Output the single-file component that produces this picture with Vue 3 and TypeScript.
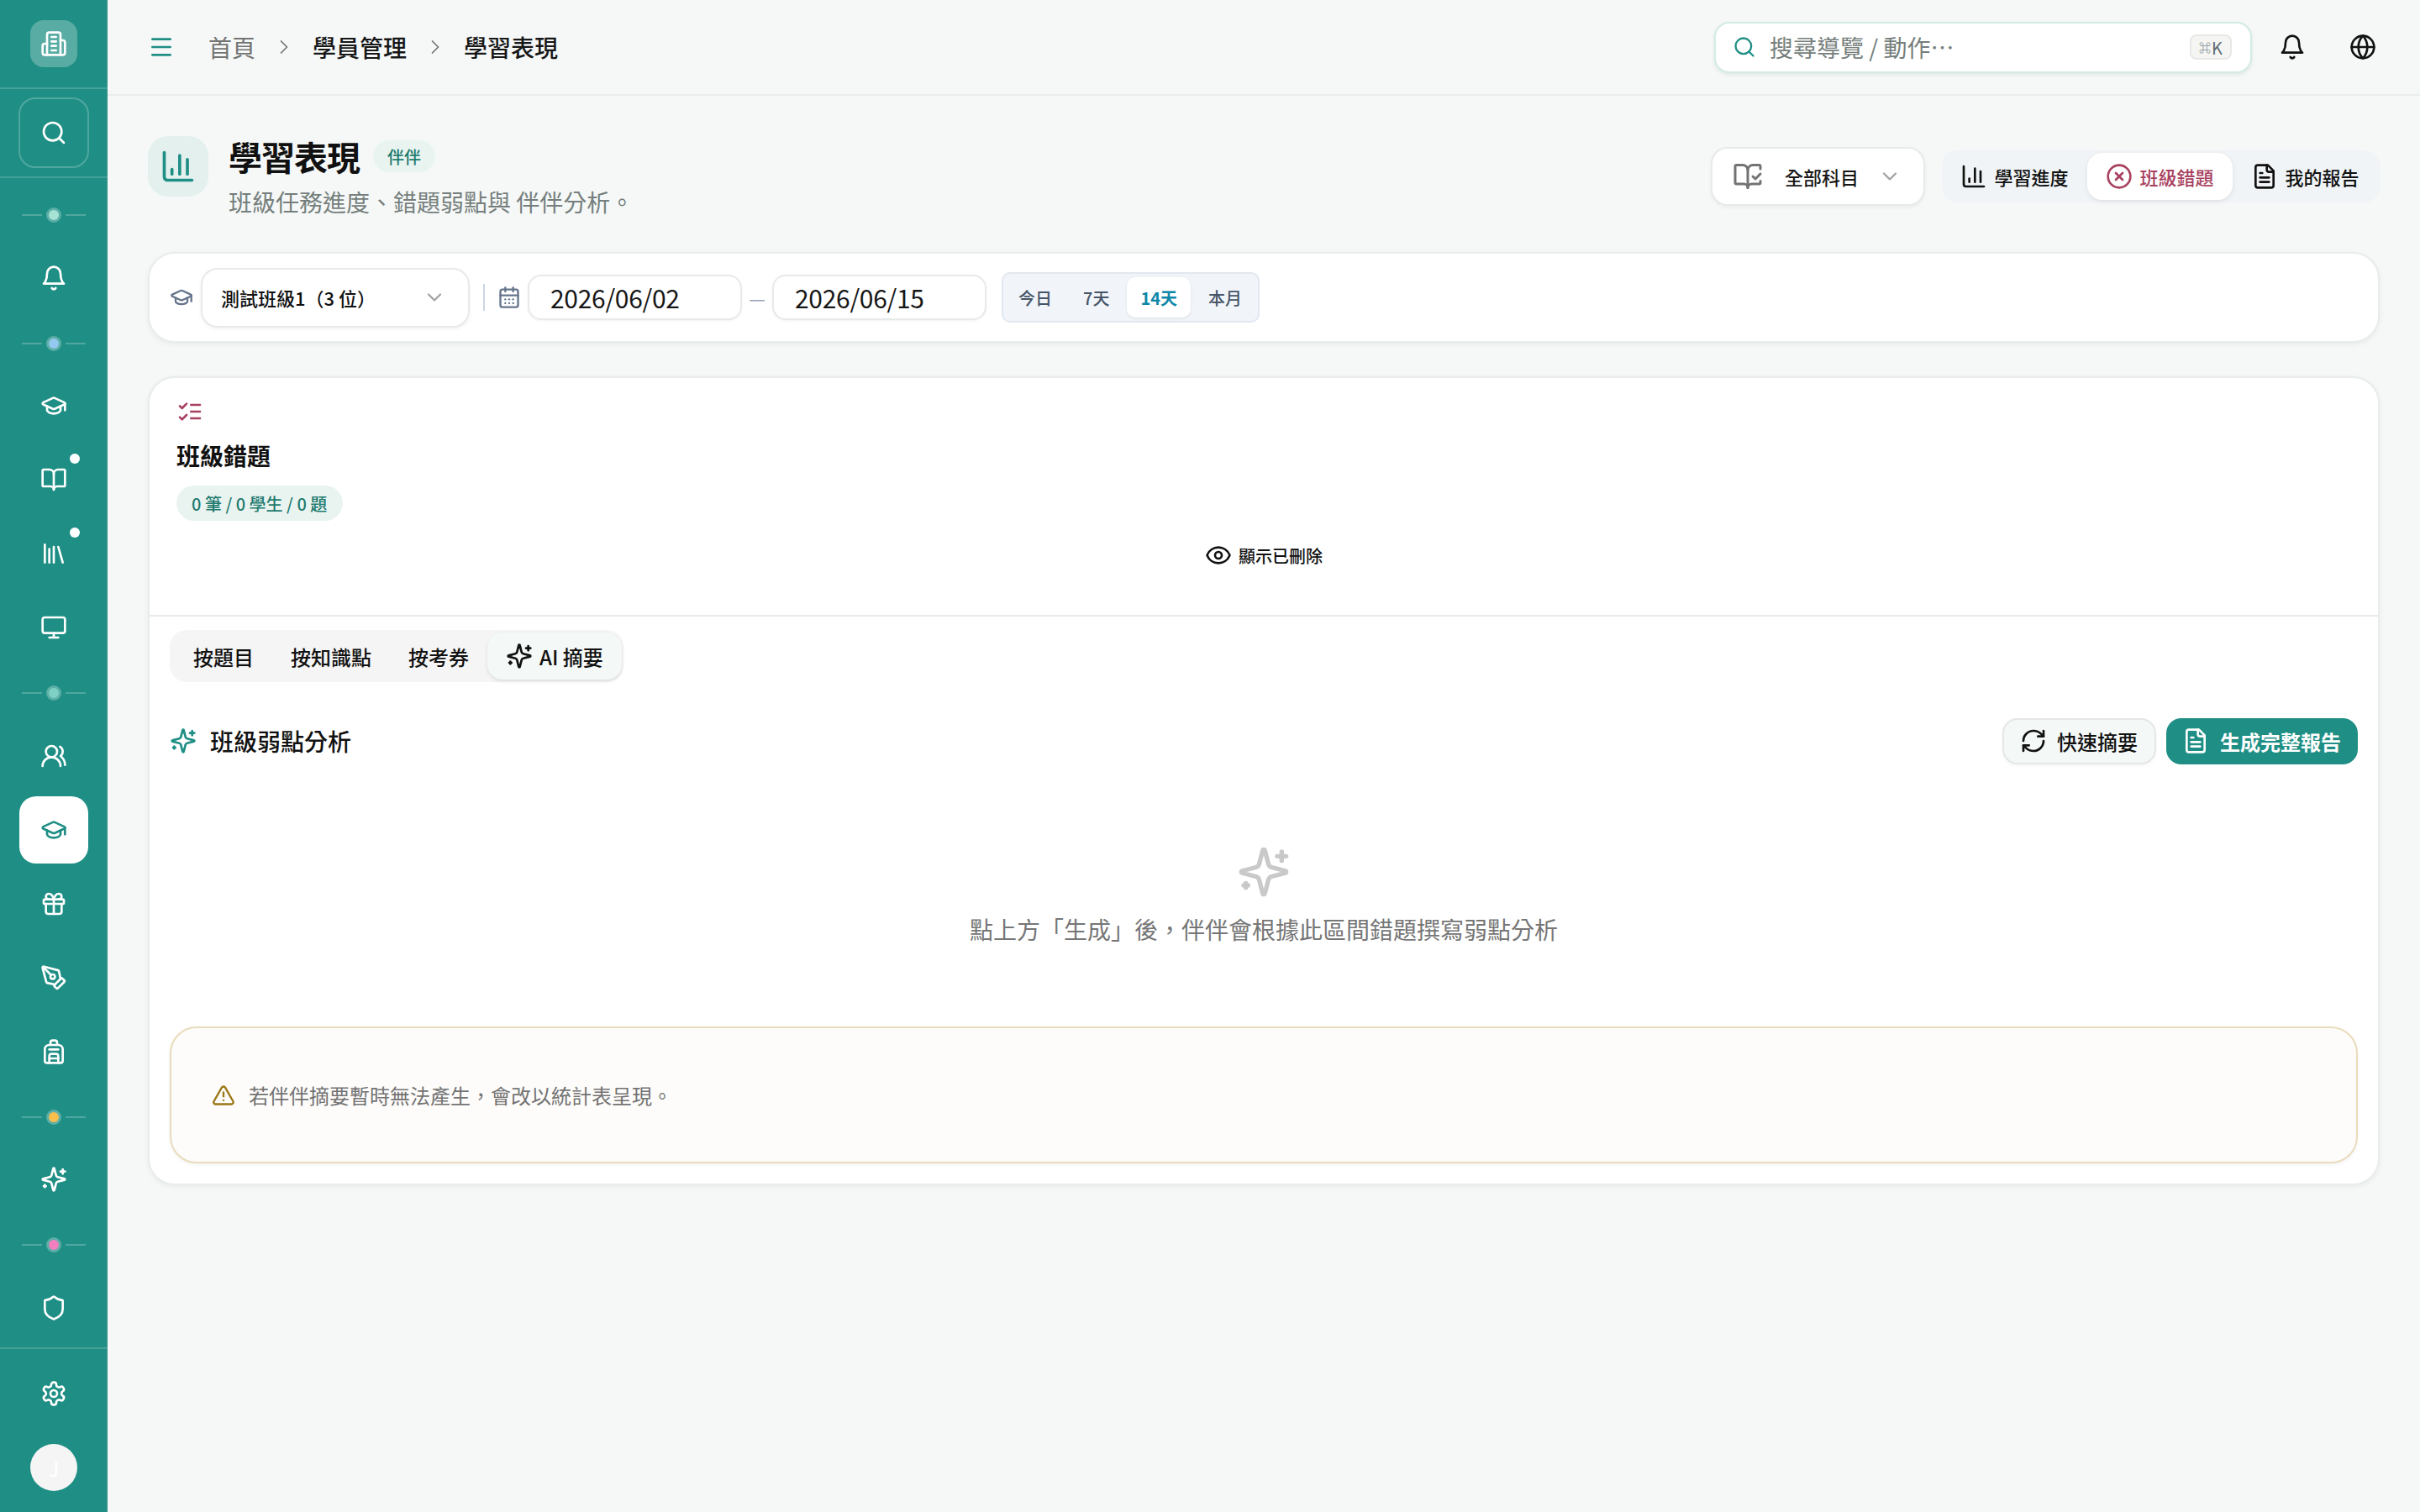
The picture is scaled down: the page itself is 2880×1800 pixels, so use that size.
<script setup lang="ts">
const ic: Record<string, string> = {
  building: '<path d="M6 22V4a2 2 0 0 1 2-2h8a2 2 0 0 1 2 2v18Z"/><path d="M6 12H4a2 2 0 0 0-2 2v6a2 2 0 0 0 2 2h2"/><path d="M18 9h2a2 2 0 0 1 2 2v9a2 2 0 0 1-2 2h-2"/><path d="M10 6h4"/><path d="M10 10h4"/><path d="M10 14h4"/><path d="M10 18h4"/>',
  search: '<circle cx="11" cy="11" r="8"/><path d="m21 21-4.3-4.3"/>',
  bell: '<path d="M6 8a6 6 0 0 1 12 0c0 7 3 9 3 9H3s3-2 3-9"/><path d="M10.3 21a1.94 1.94 0 0 0 3.4 0"/>',
  cap: '<path d="M21.42 10.922a1 1 0 0 0-.019-1.838L12.83 5.18a2 2 0 0 0-1.66 0L2.6 9.08a1 1 0 0 0 0 1.832l8.57 3.908a2 2 0 0 0 1.66 0z"/><path d="M22 10v6"/><path d="M6 12.5V16a6 3 0 0 0 12 0v-3.5"/>',
  book: '<path d="M12 7v14"/><path d="M3 18a1 1 0 0 1-1-1V4a1 1 0 0 1 1-1h5a4 4 0 0 1 4 4 4 4 0 0 1 4-4h5a1 1 0 0 1 1 1v13a1 1 0 0 1-1 1h-6a3 3 0 0 0-3 3 3 3 0 0 0-3-3z"/>',
  library: '<path d="m16 6 4 14"/><path d="M12 6v14"/><path d="M8 8v12"/><path d="M4 4v16"/>',
  monitor: '<rect x="2" y="3" width="20" height="14" rx="2"/><line x1="8" x2="16" y1="21" y2="21"/><line x1="12" x2="12" y1="17" y2="21"/>',
  users: '<path d="M18 21a8 8 0 0 0-16 0"/><circle cx="10" cy="8" r="5"/><path d="M22 20c0-3.37-2-6.5-4-8a5 5 0 0 0-.45-8.3"/>',
  gift: '<rect x="3" y="8" width="18" height="4" rx="1"/><path d="M12 8v13"/><path d="M19 12v7a2 2 0 0 1-2 2H7a2 2 0 0 1-2-2v-7"/><path d="M7.5 8a2.5 2.5 0 0 1 0-5A4.8 8 0 0 1 12 8a4.8 8 0 0 1 4.5-5 2.5 2.5 0 0 1 0 5"/>',
  pen: '<path d="M15.707 21.293a1 1 0 0 1-1.414 0l-1.586-1.586a1 1 0 0 1 0-1.414l5.586-5.586a1 1 0 0 1 1.414 0l1.586 1.586a1 1 0 0 1 0 1.414z"/><path d="m18 13-1.375-6.874a1 1 0 0 0-.746-.776L3.235 2.028a1 1 0 0 0-1.207 1.207L5.35 15.879a1 1 0 0 0 .776.746L13 18"/><path d="m2.3 2.3 7.286 7.286"/><circle cx="11" cy="11" r="2"/>',
  backpack: '<path d="M4 10a4 4 0 0 1 4-4h8a4 4 0 0 1 4 4v10a2 2 0 0 1-2 2H6a2 2 0 0 1-2-2z"/><path d="M8 10h8"/><path d="M8 18h8"/><path d="M8 22v-6a2 2 0 0 1 2-2h4a2 2 0 0 1 2 2v6"/><path d="M9 6V4a2 2 0 0 1 2-2h2a2 2 0 0 1 2 2v2"/>',
  sparkles: '<path d="M9.937 15.5A2 2 0 0 0 8.5 14.063l-6.135-1.582a.5.5 0 0 1 0-.962L8.5 9.936A2 2 0 0 0 9.937 8.5l1.582-6.135a.5.5 0 0 1 .963 0L14.063 8.5A2 2 0 0 0 15.5 9.937l6.135 1.581a.5.5 0 0 1 0 .964L15.5 14.063a2 2 0 0 0-1.437 1.437l-1.582 6.135a.5.5 0 0 1-.963 0z"/><path d="M20 3v4"/><path d="M22 5h-4"/><path d="M4 17v2"/><path d="M5 18H3"/>',
  shield: '<path d="M20 13c0 5-3.5 7.5-7.66 8.95a1 1 0 0 1-.67-.01C7.5 20.5 4 18 4 13V6a1 1 0 0 1 1-1c2 0 4.5-1.2 6.24-2.72a1.17 1.17 0 0 1 1.52 0C14.51 3.81 17 5 19 5a1 1 0 0 1 1 1z"/>',
  settings: '<path d="M12.22 2h-.44a2 2 0 0 0-2 2v.18a2 2 0 0 1-1 1.73l-.43.25a2 2 0 0 1-2 0l-.15-.08a2 2 0 0 0-2.73.73l-.22.38a2 2 0 0 0 .73 2.73l.15.1a2 2 0 0 1 1 1.72v.51a2 2 0 0 1-1 1.74l-.15.09a2 2 0 0 0-.73 2.73l.22.38a2 2 0 0 0 2.73.73l.15-.08a2 2 0 0 1 2 0l.43.25a2 2 0 0 1 1 1.73V20a2 2 0 0 0 2 2h.44a2 2 0 0 0 2-2v-.18a2 2 0 0 1 1-1.73l.43-.25a2 2 0 0 1 2 0l.15.08a2 2 0 0 0 2.73-.73l.22-.39a2 2 0 0 0-.73-2.73l-.15-.08a2 2 0 0 1-1-1.74v-.5a2 2 0 0 1 1-1.74l.15-.09a2 2 0 0 0 .73-2.73l-.22-.38a2 2 0 0 0-2.73-.73l-.15.08a2 2 0 0 1-2 0l-.43-.25a2 2 0 0 1-1-1.73V4a2 2 0 0 0-2-2z"/><circle cx="12" cy="12" r="3"/>',
  menu: '<path d="M4 5h16"/><path d="M4 12h16"/><path d="M4 19h16"/>',
  globe: '<circle cx="12" cy="12" r="10"/><path d="M12 2a14.5 14.5 0 0 0 0 20 14.5 14.5 0 0 0 0-20"/><path d="M2 12h20"/>',
  right: '<path d="m9 18 6-6-6-6"/>',
  down: '<path d="m6 9 6 6 6-6"/>',
  bookCheck: '<path d="M12 21V7"/><path d="m16 12 2 2 4-4"/><path d="M22 6V4a1 1 0 0 0-1-1h-5a4 4 0 0 0-4 4 4 4 0 0 0-4-4H3a1 1 0 0 0-1 1v13a1 1 0 0 0 1 1h6a3 3 0 0 1 3 3 3 3 0 0 1 3-3h6a1 1 0 0 0 1-1v-1.3"/>',
  chart: '<path d="M3 3v16a2 2 0 0 0 2 2h16"/><path d="M18 17V7.5"/><path d="M13 17V5"/><path d="M8 17v-3"/>',
  circleX: '<circle cx="12" cy="12" r="10"/><path d="m15 9-6 6"/><path d="m9 9 6 6"/>',
  file: '<path d="M15 2H6a2 2 0 0 0-2 2v16a2 2 0 0 0 2 2h12a2 2 0 0 0 2-2V7Z"/><path d="M14 2v4a2 2 0 0 0 2 2h4"/><path d="M10 9H8"/><path d="M16 13H8"/><path d="M16 17H8"/>',
  calendar: '<path d="M8 2v4"/><path d="M16 2v4"/><rect x="3" y="4" width="18" height="18" rx="2"/><path d="M3 10h18"/><path d="M8 14h.01"/><path d="M12 14h.01"/><path d="M16 14h.01"/><path d="M8 18h.01"/><path d="M12 18h.01"/><path d="M16 18h.01"/>',
  listChecks: '<path d="m3 17 2 2 4-4"/><path d="m3 7 2 2 4-4"/><path d="M13 6h8"/><path d="M13 12h8"/><path d="M13 18h8"/>',
  eye: '<path d="M2.062 12.348a1 1 0 0 1 0-.696 10.75 10.75 0 0 1 19.876 0 1 1 0 0 1 0 .696 10.75 10.75 0 0 1-19.876 0"/><circle cx="12" cy="12" r="3"/>',
  refresh: '<path d="M3 12a9 9 0 0 1 9-9 9.75 9.75 0 0 1 6.74 2.74L21 8"/><path d="M21 3v5h-5"/><path d="M21 12a9 9 0 0 1-9 9 9.75 9.75 0 0 1-6.74-2.74L3 16"/><path d="M8 16H3v5"/>',
  alert: '<path d="m21.73 18-8-14a2 2 0 0 0-3.48 0l-8 14A2 2 0 0 0 4 21h16a2 2 0 0 0 1.73-3"/><path d="M12 9v4"/><path d="M12 17h.01"/>',
}

type NavEntry = { sep?: string; icon?: string; active?: boolean; dot?: boolean }
const nav: NavEntry[] = [
  { sep: '#a7e3d4' },
  { icon: 'bell' },
  { sep: '#93c9f0' },
  { icon: 'cap' },
  { icon: 'book', dot: true },
  { icon: 'library', dot: true },
  { icon: 'monitor' },
  { sep: '#7fd0c4' },
  { icon: 'users' },
  { icon: 'cap', active: true },
  { icon: 'gift' },
  { icon: 'pen' },
  { icon: 'backpack' },
  { sep: '#fbbf4d' },
  { icon: 'sparkles' },
  { sep: '#f27fc0' },
  { icon: 'shield' },
]
const ranges = [
  { label: '今日' },
  { label: '7天' },
  { label: '14天', active: true },
  { label: '本月' },
]
const views = [
  { label: '學習進度', icon: 'chart' },
  { label: '班級錯題', icon: 'circleX', active: true },
  { label: '我的報告', icon: 'file' },
]
const tabs = ['按題目', '按知識點', '按考券']
</script>

<template>
  <div class="shell">
    <aside class="side">
      <div class="side-logo">
        <span class="logo-tile"><svg class="ic ic32" viewBox="0 0 24 24" v-html="ic.building"></svg></span>
      </div>
      <div class="side-search">
        <button class="search-tile"><svg class="ic ic32" viewBox="0 0 24 24" v-html="ic.search"></svg></button>
      </div>
      <nav class="side-nav">
        <template v-for="(n, i) in nav" :key="i">
          <div v-if="n.sep" class="sep">
            <i></i><b :style="{ background: n.sep }"></b><i></i>
          </div>
          <a v-else class="nav-item" :class="{ on: n.active }">
            <svg class="ic ic32" viewBox="0 0 24 24" v-html="ic[n.icon!]"></svg>
            <span v-if="n.dot" class="nav-dot"></span>
          </a>
        </template>
      </nav>
      <div class="side-foot">
        <svg class="ic ic32" viewBox="0 0 24 24" v-html="ic.settings"></svg>
        <div class="avatar">J</div>
      </div>
    </aside>

    <div class="main">
      <header class="top">
        <svg class="ic ic32 teal" viewBox="0 0 24 24" v-html="ic.menu"></svg>
        <div class="crumbs">
          <span class="crumb muted">首頁</span>
          <svg class="ic ic28 crumb-sep" viewBox="0 0 24 24" v-html="ic.right"></svg>
          <span class="crumb">學員管理</span>
          <svg class="ic ic28 crumb-sep" viewBox="0 0 24 24" v-html="ic.right"></svg>
          <span class="crumb">學習表現</span>
        </div>
        <div class="top-right">
          <div class="searchbox">
            <svg class="ic ic28 teal" viewBox="0 0 24 24" v-html="ic.search"></svg>
            <span class="ph">搜尋導覽 / 動作…</span>
            <kbd class="kbd"><span class="cmd">⌘</span>K</kbd>
          </div>
          <svg class="ic ic32 top-ic" viewBox="0 0 24 24" v-html="ic.bell"></svg>
          <svg class="ic ic32 top-ic" viewBox="0 0 24 24" v-html="ic.globe"></svg>
        </div>
      </header>

      <main class="content">
        <section class="page-head">
          <div class="head-ic"><svg class="ic ic44 teal" viewBox="0 0 24 24" v-html="ic.chart"></svg></div>
          <div class="head-text">
            <div class="head-title">
              <h1>學習表現</h1>
              <span class="badge">伴伴</span>
            </div>
            <p>班級任務進度、錯題弱點與 伴伴分析。</p>
          </div>
          <div class="head-right">
            <div class="subject">
              <svg class="ic ic36 grey" viewBox="0 0 24 24" v-html="ic.bookCheck"></svg>
              <span>全部科目</span>
              <svg class="ic ic28 chev" viewBox="0 0 24 24" v-html="ic.down"></svg>
            </div>
            <div class="views">
              <button v-for="v in views" :key="v.label" class="view" :class="{ on: v.active }">
                <svg class="ic ic32" viewBox="0 0 24 24" v-html="ic[v.icon]"></svg>
                <span>{{ v.label }}</span>
              </button>
            </div>
          </div>
        </section>

        <section class="filters card">
          <svg class="ic ic28 slate" viewBox="0 0 24 24" v-html="ic.cap"></svg>
          <div class="class-select">
            <span>測試班級1（3 位）</span>
            <svg class="ic ic28 chev" viewBox="0 0 24 24" v-html="ic.down"></svg>
          </div>
          <span class="vr"></span>
          <svg class="ic ic28 slate" viewBox="0 0 24 24" v-html="ic.calendar"></svg>
          <div class="date">2026/06/02</div>
          <span class="dash">—</span>
          <div class="date">2026/06/15</div>
          <div class="ranges">
            <button v-for="r in ranges" :key="r.label" class="range" :class="{ on: r.active }">{{ r.label }}</button>
          </div>
        </section>

        <section class="panel card">
          <div class="panel-head">
            <svg class="ic ic32 rose" viewBox="0 0 24 24" v-html="ic.listChecks"></svg>
            <h2>班級錯題</h2>
            <span class="chip">0 筆 / 0 學生 / 0 題</span>
            <button class="show-del">
              <svg class="ic ic32" viewBox="0 0 24 24" v-html="ic.eye"></svg>
              <span>顯示已刪除</span>
            </button>
          </div>
          <div class="panel-body">
            <div class="tabs">
              <button v-for="t in tabs" :key="t" class="tab">{{ t }}</button>
              <button class="tab on">
                <svg class="ic ic32" viewBox="0 0 24 24" v-html="ic.sparkles"></svg>
                <span>AI 摘要</span>
              </button>
            </div>
            <div class="sec-head">
              <svg class="ic ic32 teal" viewBox="0 0 24 24" v-html="ic.sparkles"></svg>
              <h3>班級弱點分析</h3>
              <div class="sec-actions">
                <button class="btn ghost">
                  <svg class="ic ic32" viewBox="0 0 24 24" v-html="ic.refresh"></svg>
                  <span>快速摘要</span>
                </button>
                <button class="btn solid">
                  <svg class="ic ic32" viewBox="0 0 24 24" v-html="ic.file"></svg>
                  <span>生成完整報告</span>
                </button>
              </div>
            </div>
            <div class="empty">
              <svg class="ic ic64" viewBox="0 0 24 24" v-html="ic.sparkles"></svg>
              <p>點上方「生成」後，伴伴會根據此區間錯題撰寫弱點分析</p>
            </div>
            <div class="warn">
              <svg class="ic ic28 amber" viewBox="0 0 24 24" v-html="ic.alert"></svg>
              <span>若伴伴摘要暫時無法產生，會改以統計表呈現。</span>
            </div>
          </div>
        </section>
      </main>
    </div>
  </div>
</template>

<style>
html, body { margin: 0; padding: 0; background: #f5f8f7; }
</style>

<style scoped>
* { box-sizing: border-box; }
.shell {
  display: flex;
  width: 2880px;
  height: 1800px;
  overflow: hidden;
  background: #f5f8f7;
  color: #111;
  font-family: "Noto Sans CJK TC", "Noto Sans", sans-serif;
}
button { font: inherit; color: inherit; background: none; border: 0; padding: 0; white-space: nowrap; }
h1, h2, h3, p { margin: 0; }

.ic { display: block; flex: none; fill: none; stroke: currentColor; stroke-width: 2; stroke-linecap: round; stroke-linejoin: round; }
.ic28 { width: 28px; height: 28px; }
.ic32 { width: 32px; height: 32px; }
.ic36 { width: 36px; height: 36px; }
.ic44 { width: 44px; height: 44px; }
.ic64 { width: 64px; height: 64px; }
.teal { color: #1f8f85; }
.slate { color: #64748b; }
.rose { color: #a8415f; }
.grey { color: #737373; }
.amber { color: #9a7612; }
.chev { color: #a3a3a3; }

/* sidebar */
.side {
  flex: none;
  width: 128px;
  background: #1f8f85;
  color: #fff;
  display: flex;
  flex-direction: column;
  box-shadow: inset -2px 0 0 #2a9186;
}
.side-logo {
  height: 106px;
  display: flex;
  justify-content: center;
  align-items: flex-start;
  padding-top: 24px;
  border-bottom: 2px solid rgba(255, 255, 255, 0.16);
}
.logo-tile {
  width: 56px;
  height: 56px;
  border-radius: 16px;
  background: rgba(255, 255, 255, 0.26);
  display: flex;
  align-items: center;
  justify-content: center;
}
.side-search {
  height: 106px;
  display: flex;
  align-items: center;
  justify-content: center;
  border-bottom: 2px solid rgba(255, 255, 255, 0.16);
}
.search-tile {
  width: 84px;
  height: 84px;
  border-radius: 20px;
  border: 2px solid rgba(255, 255, 255, 0.22);
  color: #fff;
  display: flex;
  align-items: center;
  justify-content: center;
}
.side-nav {
  display: flex;
  flex-direction: column;
  align-items: center;
  padding-top: 14px;
  flex: none;
  height: 1394px;
  border-bottom: 2px solid rgba(255, 255, 255, 0.16);
}
.sep {
  height: 64.5px;
  width: 100%;
  padding-bottom: 4px;
  display: flex;
  align-items: center;
  justify-content: center;
  gap: 8px;
  flex: none;
}
.sep i { width: 24px; height: 2px; background: rgba(255, 255, 255, 0.22); }
.sep b {
  width: 12px;
  height: 12px;
  border-radius: 50%;
  box-shadow: 0 0 0 3px rgba(255, 255, 255, 0.28);
}
.nav-item {
  position: relative;
  width: 82px;
  height: 80px;
  flex: none;
  margin-bottom: 8px;
  display: flex;
  align-items: center;
  justify-content: center;
  border-radius: 20px;
  color: #fff;
}
.nav-item.on { background: #fff; color: #1f8f85; }
.nav-dot {
  position: absolute;
  top: 9px;
  right: 10px;
  width: 12px;
  height: 12px;
  border-radius: 50%;
  background: #fff;
}
.side-foot {
  flex: 1;
  display: flex;
  flex-direction: column;
  align-items: center;
  padding-top: 37px;
  gap: 44px;
}
.avatar {
  width: 56px;
  height: 56px;
  border-radius: 50%;
  background: #f5f5f5;
  color: #fff;
  display: flex;
  align-items: center;
  justify-content: center;
  font-size: 24px;
}

/* main */
.main { flex: 1; min-width: 0; display: flex; flex-direction: column; }
.top {
  height: 114px;
  flex: none;
  display: flex;
  align-items: center;
  padding: 0 48px;
  border-bottom: 2px solid #e9eded;
}
.crumbs { display: flex; align-items: center; gap: 20px; margin-left: 40px; font-size: 28px; }
.crumb { font-weight: 500; color: #171717; line-height: 40px; }
.crumb.muted { color: #737373; font-weight: 400; }
.crumb-sep { color: #737373; stroke-width: 1.5; }
.top-right { margin-left: auto; display: flex; align-items: center; }
.searchbox {
  width: 640px;
  height: 61px;
  border: 2px solid #d3ebe5;
  border-radius: 18px;
  background: #fff;
  box-shadow: 0 2px 4px rgba(30, 90, 80, 0.1);
  display: flex;
  align-items: center;
  padding: 0 22px 0 20px;
  margin-right: 32px;
}
.ph { margin-left: 16px; font-size: 28px; color: #767f7d; flex: 1; }
.kbd {
  width: 50px;
  height: 30px;
  border: 2px solid #e7e9e6;
  border-radius: 8px;
  background: #f5f6f3;
  color: #5f6b73;
  font-size: 20px;
  font-family: inherit;
  display: flex;
  align-items: center;
  justify-content: center;
}
.cmd { font-size: 14px; margin-right: 1px; }
.top-ic { color: #111; }
.top-ic + .top-ic { margin-left: 52px; margin-right: 4px; }

.content { padding: 48px 48px 0; display: flex; flex-direction: column; }

.page-head { display: flex; align-items: flex-start; height: 138px; }
.head-ic {
  width: 72px;
  height: 72px;
  border-radius: 24px;
  background: #e3f0ee;
  display: flex;
  align-items: center;
  justify-content: center;
  flex: none;
}
.head-text { margin-left: 24px; }
.head-title { display: flex; align-items: center; height: 52px; margin-top: -2px; }
.head-title h1 { font-size: 40px; font-weight: 700; letter-spacing: -1px; line-height: 52px; }
.badge {
  margin-left: 16px;
  height: 38px;
  padding: 0 17px;
  border-radius: 19px;
  background: #e9f4f1;
  color: #1e7a6e;
  font-size: 20px;
  font-weight: 500;
  display: flex;
  align-items: center;
}
.head-text p { margin-top: 7px; font-size: 28px; color: #767f7d; line-height: 42px; }
.head-right { margin-left: auto; display: flex; align-items: center; gap: 20px; margin-top: 13px; }
.subject {
  width: 255px;
  height: 70px;
  background: #fff;
  border: 2px solid #e8eaea;
  border-radius: 20px;
  box-shadow: 0 2px 4px rgba(0, 0, 0, 0.05);
  display: flex;
  align-items: center;
  padding: 0 26px 0 24px;
  font-size: 22px;
  font-weight: 500;
}
.subject span { margin-left: 26px; flex: 1; color: #171717; }
.views { display: flex; padding: 3px 2px 3px 0; background: #f0f4f7; border-radius: 18px; }
.view {
  height: 56px;
  width: 173px;
  display: flex;
  align-items: center;
  justify-content: center;
  gap: 8px;
  border-radius: 18px;
  font-size: 22px;
  font-weight: 500;
}
.view.on { background: #fff; color: #a8415f; box-shadow: 0 2px 6px rgba(0, 0, 0, 0.08); }

.card {
  background: #fff;
  border: 2px solid #e9ecec;
  border-radius: 32px;
  box-shadow: 0 2px 6px rgba(0, 0, 0, 0.06);
}
.filters {
  height: 108px;
  display: flex;
  align-items: center;
  padding: 0 24px;
}
.class-select {
  width: 320px;
  height: 71px;
  margin-left: 9px;
  border: 2px solid #e8eaea;
  border-radius: 20px;
  background: #fff;
  box-shadow: 0 2px 4px rgba(0, 0, 0, 0.05);
  display: flex;
  align-items: center;
  padding: 0 26px 0 22px;
  font-size: 22px;
  font-weight: 500;
}
.class-select span { flex: 1; }
.vr { width: 2px; height: 32px; background: #cbd5e1; margin: 0 15px 0 16px; flex: none; }
.date {
  width: 255px;
  height: 54px;
  margin-left: 8px;
  border: 2px solid #e8eaea;
  border-radius: 16px;
  background: #fff;
  box-shadow: 0 1px 3px rgba(0, 0, 0, 0.05);
  display: flex;
  align-items: center;
  padding-left: 25px;
  font-size: 30px;
  letter-spacing: -0.3px;
  color: #171717;
}
.dash { width: 36px; text-align: center; color: #94a3b8; font-size: 22px; }
.dash + .date { margin-left: 0; }
.ranges {
  margin-left: 18px;
  height: 60px;
  padding: 4px 3px 4px 2px;
  display: flex;
  gap: 5px;
  background: #f1f5f9;
  border: 2px solid #e2e8f0;
  border-radius: 10px;
}
.range { padding: 0 16px; font-size: 20px; font-weight: 500; color: #475569; border-radius: 10px; }
.range.on { background: #fff; color: #0e87a8; font-weight: 700; box-shadow: 0 1px 3px rgba(0, 0, 0, 0.1); }

.panel { margin-top: 40px; height: 963px; display: flex; flex-direction: column; }
.panel-head {
  height: 284px;
  flex: none;
  border-bottom: 2px solid #e8eaea;
  padding: 24px 32px 0;
  position: relative;
  display: flex;
  flex-direction: column;
  align-items: flex-start;
}
.panel-head h2 { font-size: 28px; font-weight: 700; line-height: 40px; margin-top: 16px; }
.chip {
  margin-top: 16px;
  height: 42px;
  min-width: 198px;
  padding: 0 18px;
  border-radius: 21px;
  background: #e9f4f1;
  color: #1e7a6e;
  font-size: 20px;
  font-weight: 500;
  display: flex;
  align-items: center;
}
.show-del {
  align-self: center;
  margin-top: 25px;
  display: flex;
  align-items: center;
  gap: 8px;
  font-size: 20px;
  font-weight: 500;
}
.panel-body { flex: 1; padding: 16px 24px 24px; display: flex; flex-direction: column; }
.tabs {
  align-self: flex-start;
  display: flex;
  align-items: center;
  height: 62px;
  padding: 0 2px 0 6px;
  background: #f5f5f5;
  border-radius: 20px;
}
.tab {
  height: 56px;
  padding: 0 22px;
  font-size: 24px;
  font-weight: 500;
  display: flex;
  align-items: center;
  gap: 8px;
  border-radius: 18px;
}
.tab.on { padding: 0 22px; background: #f4f8f7; box-shadow: 0 2px 4px rgba(0, 0, 0, 0.1); }
.sec-head { display: flex; align-items: center; margin-top: 42px; height: 56px; }
.sec-head h3 { margin-left: 16px; font-size: 28px; font-weight: 500; }
.sec-actions { margin-left: auto; display: flex; gap: 12px; }
.btn {
  height: 55px;
  border-radius: 18px;
  display: flex;
  align-items: center;
  padding: 0 20px 0 19px;
  font-size: 24px;
  font-weight: 500;
}
.btn.ghost { gap: 12px; background: #f4f8f7; border: 2px solid #e5e7e7; box-shadow: 0 2px 4px rgba(0, 0, 0, 0.04); }
.btn.solid { gap: 13px; background: #1f8f85; color: #fff; font-weight: 700; }
.empty {
  margin-top: 96px;
  display: flex;
  flex-direction: column;
  align-items: center;
  color: #767676;
}
.empty .ic { color: #c9c9c9; }
.empty p { margin-top: 15px; font-size: 28px; color: #767676; line-height: 42px; }
.warn {
  height: 163px;
  margin-top: auto;
  flex: none;
  display: flex;
  align-items: center;
  gap: 16px;
  padding: 0 48px;
  border: 2px solid #e9dcbb;
  border-radius: 32px;
  background: #fdfcfa;
  box-shadow: 0 2px 4px rgba(0, 0, 0, 0.05);
  font-size: 24px;
  color: #737373;
}
</style>
